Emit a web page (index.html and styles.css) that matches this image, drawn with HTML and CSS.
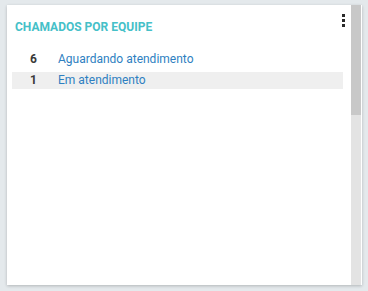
FILE: index.html
```
<!DOCTYPE html>
<html>
<head>
<meta charset="utf-8">
<link rel="stylesheet" href="styles.css">
</head>
<body>
<div class="card">
  <div class="content">
    <div class="title">CHAMADOS POR EQUIPE</div>
    <ul class="list">
      <li class="row"><span class="num">6</span><span class="label">Aguardando atendimento</span></li>
      <li class="row alt"><span class="num">1</span><span class="label">Em atendimento</span></li>
    </ul>
    <div class="kebab"><i></i><i></i><i></i></div>
  </div>
  <div class="scrollbar"><div class="thumb"></div></div>
</div>
</body>
</html>
```
FILE: styles.css
```
html, body { margin: 0; padding: 0; }
body {
  background: #e4e9ec;
  width: 368px;
  height: 291px;
  padding: 5px 0 0 7px;
  box-sizing: border-box;
  font-family: Roboto, "Noto Sans", sans-serif;
}
.card {
  width: 355px;
  height: 280px;
  background: #fff;
  display: flex;
  box-shadow: 0 1px 3px rgba(0,0,0,0.22);
  border-right: 1px solid #fff;
  box-sizing: border-box;
}
.content {
  flex: 1;
  position: relative;
  padding: 15px 8px 0 5px;
}
.title {
  font-size: 12px;
  line-height: 14px;
  font-weight: 700;
  color: #45c0c8;
  padding-left: 3px;
}
.list {
  list-style: none;
  margin: 17px 0 0;
  padding: 0;
  display: flex;
  flex-direction: column;
  gap: 4px;
}
.row {
  display: flex;
  height: 17px;
  line-height: 17px;
  font-size: 12px;
}
.row.alt { background: #efefef; }
.num {
  width: 25px;
  text-align: right;
  font-weight: 700;
  color: #3a3a3a;
}
.label {
  margin-left: 21px;
  color: #2e7fc1;
}
.kebab {
  position: absolute;
  top: 9px;
  right: 6px;
  display: flex;
  flex-direction: column;
  gap: 2px;
}
.kebab i {
  display: block;
  width: 3px;
  height: 3px;
  background: #2a2a2a;
}
.scrollbar {
  width: 10px;
  background: #e3e3e3;
}
.thumb {
  height: 110px;
  background: #c8c8c8;
}
```
